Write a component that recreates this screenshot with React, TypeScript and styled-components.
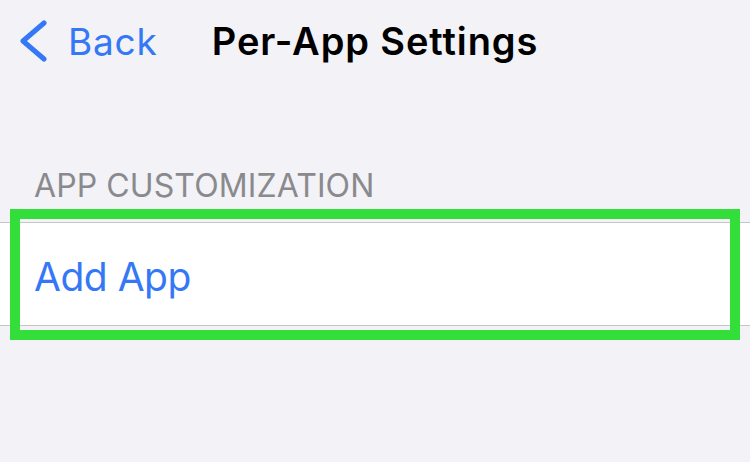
import React from "react"
import styled, { createGlobalStyle } from "styled-components"

const GlobalStyle = createGlobalStyle`
  html, body {
    margin: 0;
    padding: 0;
    background: #f2f2f7;
  }
  body {
    font-family: Inter, "Liberation Sans", sans-serif;
    -webkit-font-smoothing: antialiased;
  }
`

const Screen = styled.div`
  width: 750px;
  height: 462px;
  background: #f2f2f7;
  overflow: hidden;
`

const NavBar = styled.div`
  height: 82px;
  display: grid;
  grid-template-columns: 1fr auto 1fr;
  align-items: center;
`

const BackButton = styled.div`
  display: flex;
  align-items: center;
  gap: 20px;
  padding-left: 18px;
  color: #3478f6;
  font-size: 37px;
  letter-spacing: 0.8px;
`

const Title = styled.div`
  font-size: 38px;
  font-weight: 600;
  color: #000;
  letter-spacing: 0.9px;
`

const SectionHeader = styled.div`
  margin-top: 86px;
  padding-left: 34px;
  font-size: 32px;
  color: #8a8a8e;
  letter-spacing: 0.1px;
  height: 54px;
  line-height: 36px;
`

const Highlight = styled.div`
  position: relative;
`

const Cell = styled.div`
  box-sizing: border-box;
  height: 104px;
  background: #fff;
  border-top: 1px solid #c6c6c8;
  border-bottom: 1px solid #c6c6c8;
  display: flex;
  align-items: center;
  padding: 4px 0 0 34px;
  color: #3478f6;
  font-size: 39px;
  letter-spacing: -0.5px;
`

const Frame = styled.div`
  position: absolute;
  left: 10px;
  right: 10px;
  top: -13px;
  bottom: -14px;
  border: 10px solid #33dd3a;
  pointer-events: none;
`

const Chevron = () => (
  <svg width="30" height="42" viewBox="0 0 30 42">
    <path d="M26 3 L5 21 L26 39" fill="none" stroke="#3478f6" strokeWidth="5" strokeLinecap="round" strokeLinejoin="round" />
  </svg>
)

export default function App() {
  return (
    <Screen>
      <GlobalStyle />
      <NavBar>
        <BackButton>
          <Chevron />
          Back
        </BackButton>
        <Title>Per-App Settings</Title>
        <div />
      </NavBar>
      <SectionHeader>APP CUSTOMIZATION</SectionHeader>
      <Highlight>
        <Cell>Add App</Cell>
        <Frame />
      </Highlight>
    </Screen>
  )
}
